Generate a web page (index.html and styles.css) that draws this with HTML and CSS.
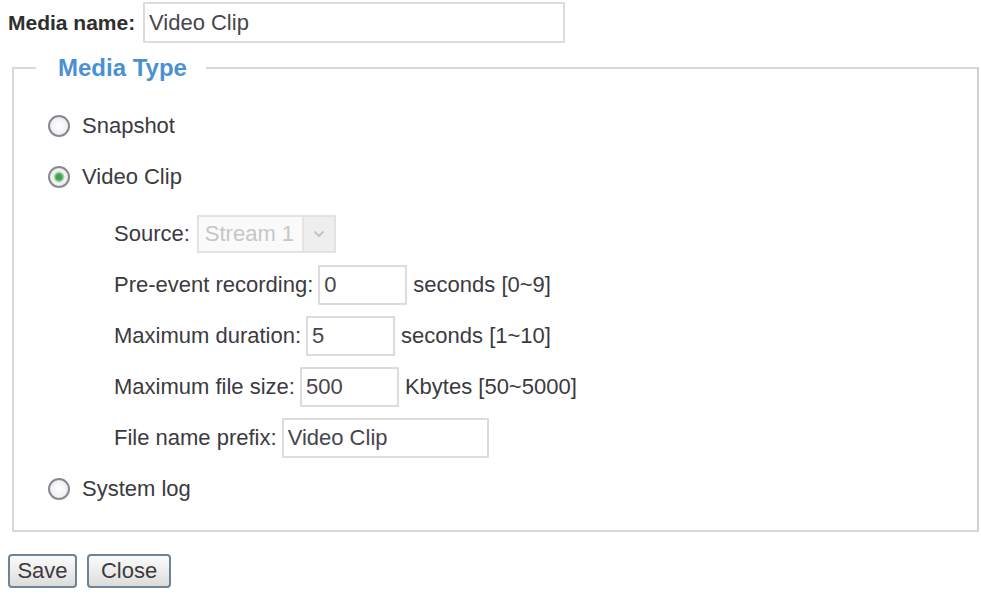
FILE: index.html
```html
<!DOCTYPE html>
<html lang="en">
<head>
<meta charset="utf-8">
<title>Media</title>
<link rel="stylesheet" href="styles.css">
</head>
<body>
<div class="page">
  <div class="name-row">
    <label class="name-label" for="media-name">Media name:</label>
    <input class="text-input name-input" id="media-name" type="text" value="Video Clip">
  </div>

  <fieldset class="media-type">
    <legend class="media-legend">Media Type</legend>

    <label class="radio-row">
      <input class="radio" type="radio" name="media">
      <span>Snapshot</span>
    </label>

    <label class="radio-row">
      <input class="radio" type="radio" name="media" checked>
      <span>Video Clip</span>
    </label>

    <div class="clip-options">
      <div class="opt-row">
        <span>Source:</span>
        <div class="select-box">
          <span class="select-value">Stream 1</span>
          <span class="select-arrow">
            <svg width="12" height="8" viewBox="0 0 12 8"><path d="M1.5 1.5 L6 6 L10.5 1.5" fill="none" stroke="#c4c4c4" stroke-width="2"/></svg>
          </span>
        </div>
      </div>
      <div class="opt-row">
        <span>Pre-event recording:</span>
        <input class="text-input w-short" type="text" value="0">
        <span>seconds [0~9]</span>
      </div>
      <div class="opt-row">
        <span>Maximum duration:</span>
        <input class="text-input w-short" type="text" value="5">
        <span>seconds [1~10]</span>
      </div>
      <div class="opt-row">
        <span>Maximum file size:</span>
        <input class="text-input w-mid" type="text" value="500">
        <span>Kbytes [50~5000]</span>
      </div>
      <div class="opt-row">
        <span>File name prefix:</span>
        <input class="text-input w-long" type="text" value="Video Clip">
      </div>
    </div>

    <label class="radio-row">
      <input class="radio" type="radio" name="media">
      <span>System log</span>
    </label>
  </fieldset>

  <div class="actions">
    <button class="btn btn-save" type="button">Save</button>
    <button class="btn btn-close" type="button">Close</button>
  </div>
</div>
</body>
</html>
```

FILE: styles.css
```css
html, body {
  margin: 0;
  padding: 0;
  background: #ffffff;
}

body {
  font-family: "Liberation Sans", Arial, sans-serif;
  font-size: 22px;
  color: #3c3a40;
}

.page {
  padding: 2px 2px 0 8px;
}

/* top row: media name */
.name-row {
  display: flex;
  align-items: center;
  height: 41px;
}

.name-label {
  font-weight: bold;
  font-size: 21px;
  color: #2e2e2e;
  width: 135px;
}

.text-input {
  box-sizing: border-box;
  height: 40px;
  border: 2px solid #dcdcdc;
  border-radius: 1px;
  padding: 0 4px;
  font-family: inherit;
  font-size: 22px;
  color: #48454c;
  background: #fff;
  outline: none;
}

.name-input {
  width: 422px;
  height: 41px;
}

/* the media type group */
.media-type {
  margin: 11px 0 0 4px;
  padding: 18px 0 16px 34px;
  border: 2px solid #d8d8d8;
  border-right-color: #cfcfcf;
}

.media-legend {
  margin-left: -12px;
  padding: 0 19px 0 22px;
  font-size: 24px;
  line-height: 28px;
  font-weight: bold;
  color: #4a91d3;
}

.radio-row {
  display: flex;
  align-items: center;
  height: 51px;
  gap: 12px;
}

.radio {
  appearance: none;
  -webkit-appearance: none;
  box-sizing: border-box;
  margin: 0;
  width: 22px;
  height: 22px;
  border: 2px solid #858b93;
  border-radius: 50%;
  background: radial-gradient(circle, #ffffff 0%, #f1f1f1 60%, #dedede 100%);
}

.radio:checked {
  background: radial-gradient(circle, #3f9c4b 0, #4aa657 3px, #bfe1c3 5px, #f4f4f4 6px, #e2e2e2 100%);
}

/* sub options of video clip */
.clip-options {
  display: flex;
  flex-direction: column;
  margin-top: 6px;
  padding-left: 66px;
}

.opt-row {
  display: flex;
  align-items: center;
  height: 51px;
  gap: 5px;
}

.opt-row .text-input + span {
  margin-left: 1px;
}

.w-short { width: 89px; }
.w-mid { width: 99px; }
.w-long { width: 207px; }

.select-box {
  box-sizing: border-box;
  display: flex;
  align-items: center;
  width: 139px;
  height: 38px;
  margin-left: 2px;
  border: 2px solid #e2e2e2;
  background: #fafafa;
}

.select-value {
  flex: 1;
  padding-left: 6px;
  color: #c6c6c6;
}

.select-arrow {
  display: flex;
  align-items: center;
  justify-content: center;
  width: 30px;
  height: 100%;
  border-left: 2px solid #e4e4e4;
  background: #eeeeee;
}

/* bottom buttons */
.actions {
  display: flex;
  gap: 10px;
  margin-top: 22px;
}

.btn {
  box-sizing: border-box;
  height: 34px;
  padding: 0;
  border: 2px solid #6f8397;
  border-radius: 4px;
  background: linear-gradient(#fbfbfb, #e9e9e9 60%, #dcdcdc);
  font-family: inherit;
  font-size: 22px;
  color: #3c3a40;
}

.btn-save { width: 69px; }
.btn-close { width: 84px; }
```
